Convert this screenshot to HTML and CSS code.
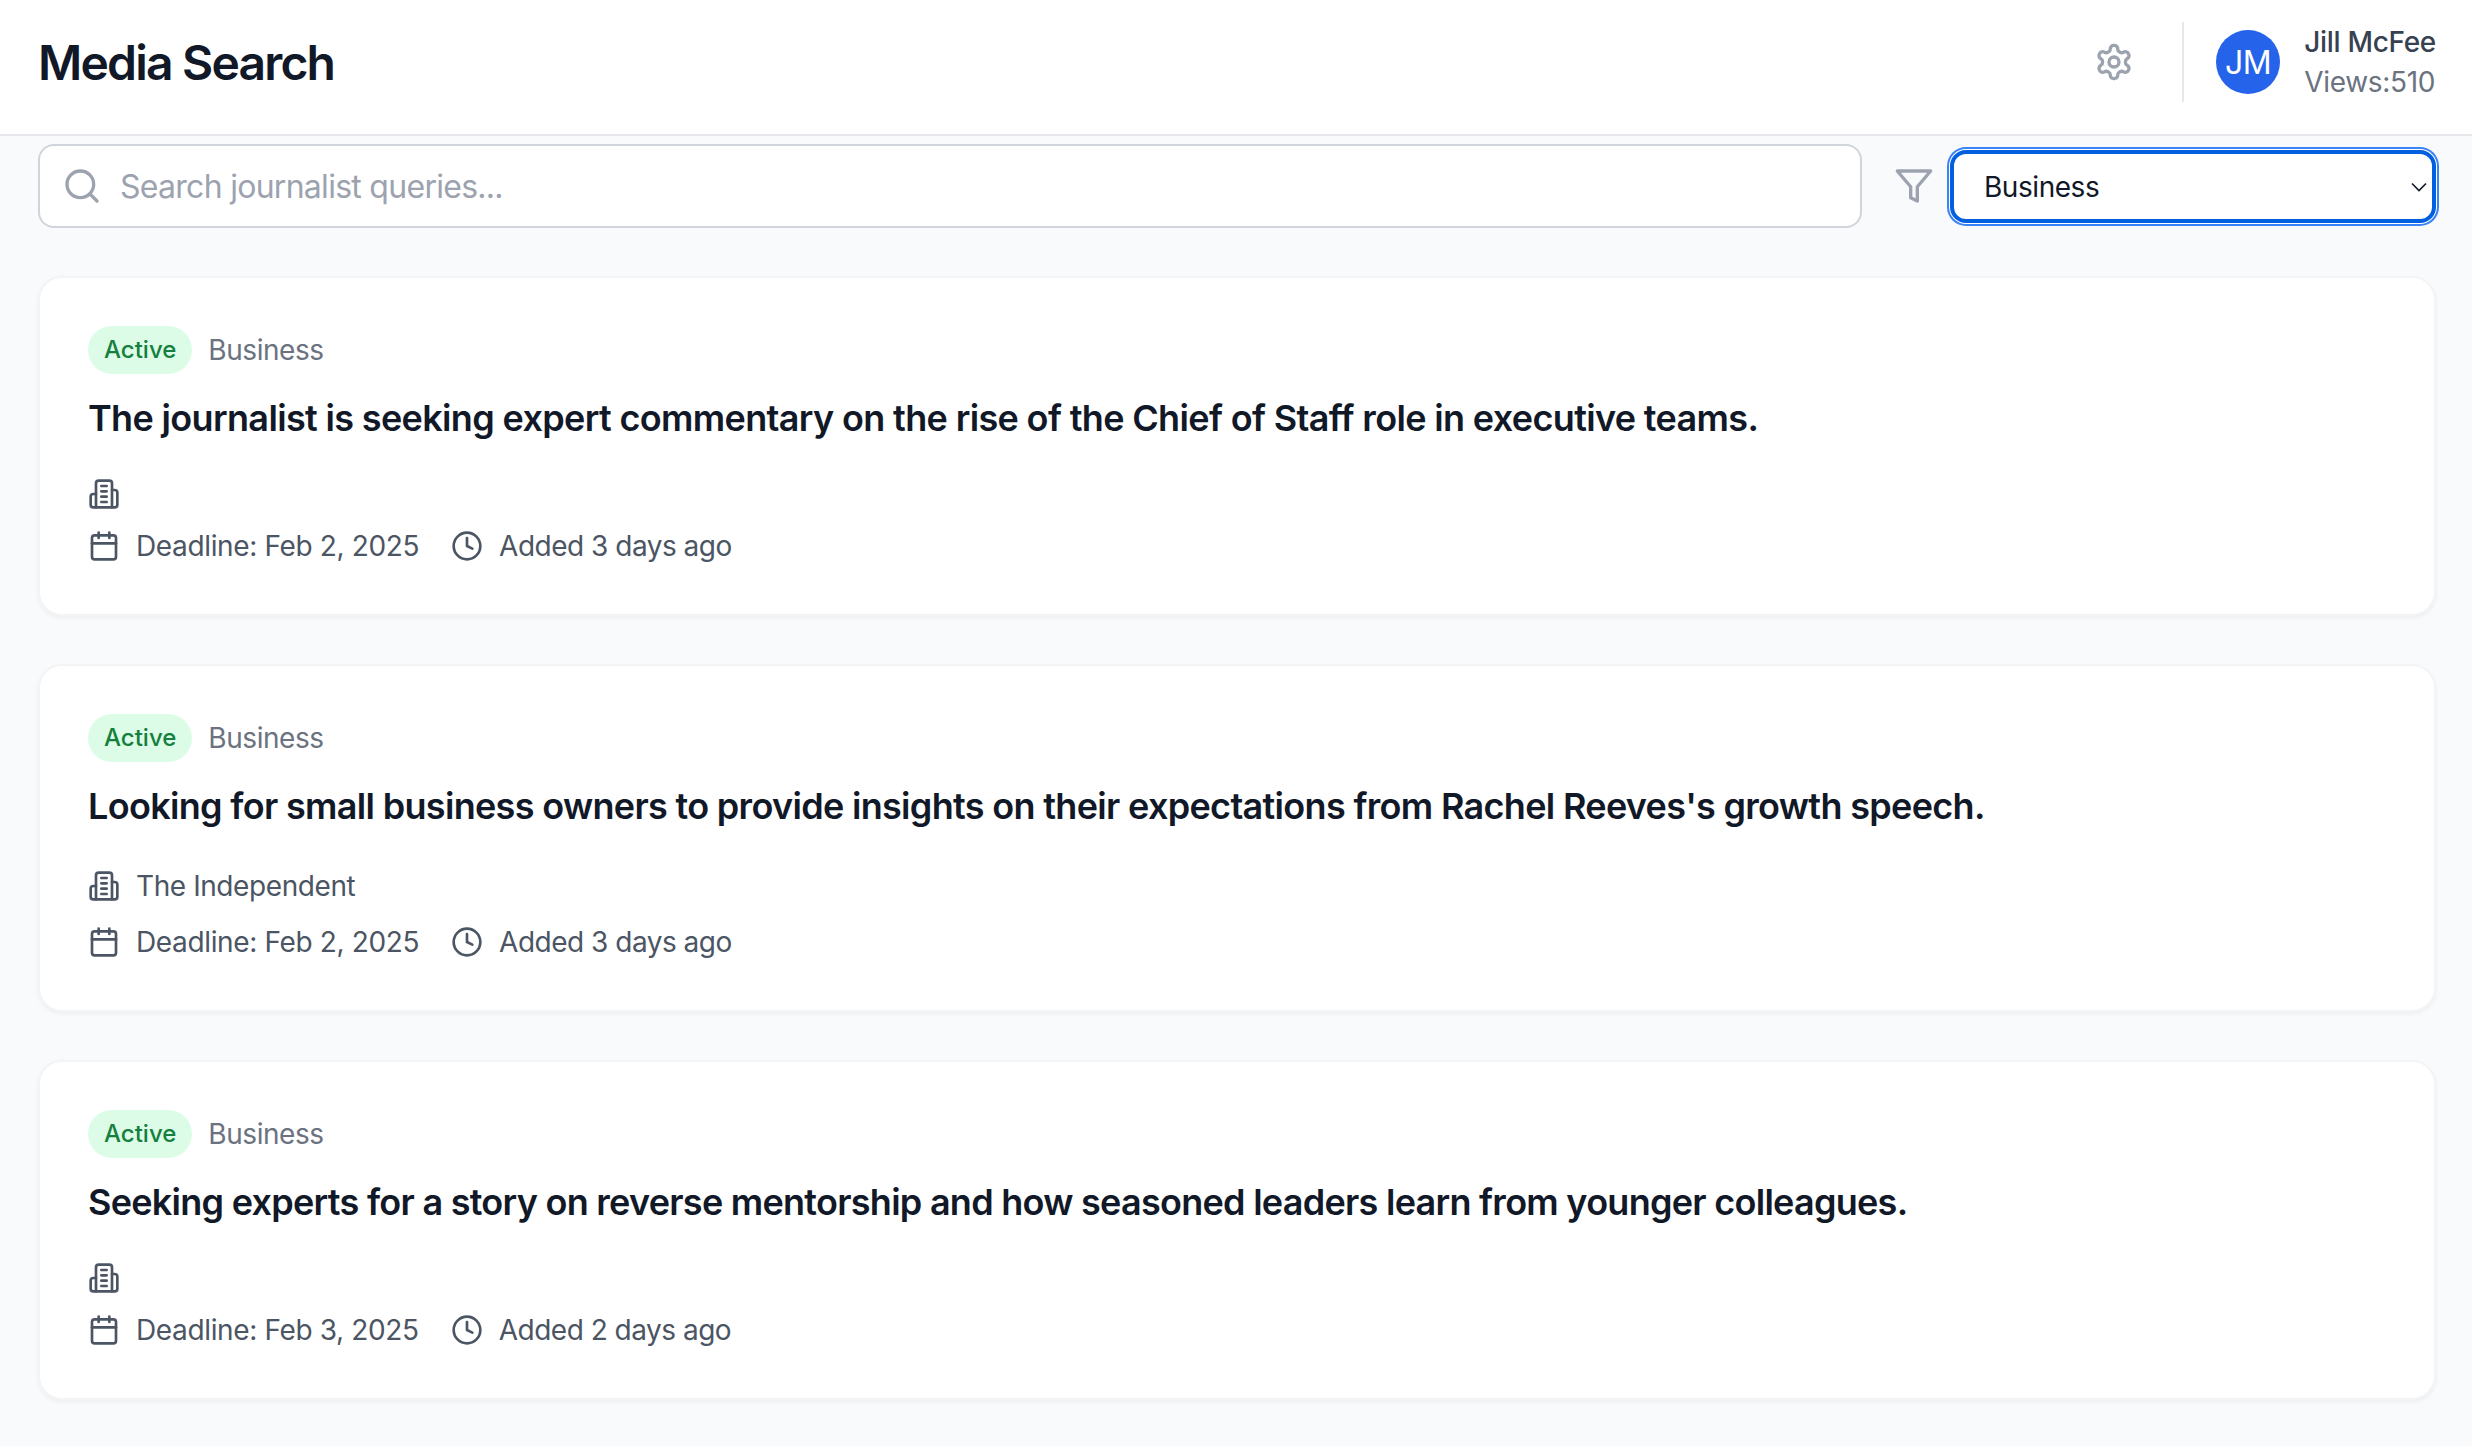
FILE: index.html
```html
<!DOCTYPE html>
<html lang="en">
<head>
<meta charset="utf-8">
<title>Media Search</title>
<link rel="stylesheet" href="styles.css">
</head>
<body>
<header class="topbar">
  <h1 class="title">Media Search</h1>
  <div class="topbar-right">
    <svg class="icon gear" viewBox="0 0 24 24"><path d="M12.22 2h-.44a2 2 0 0 0-2 2v.18a2 2 0 0 1-1 1.73l-.43.25a2 2 0 0 1-2 0l-.15-.08a2 2 0 0 0-2.73.73l-.22.38a2 2 0 0 0 .73 2.73l.15.1a2 2 0 0 1 1 1.72v.51a2 2 0 0 1-1 1.74l-.15.09a2 2 0 0 0-.73 2.73l.22.38a2 2 0 0 0 2.73.73l.15-.08a2 2 0 0 1 2 0l.43.25a2 2 0 0 1 1 1.73V20a2 2 0 0 0 2 2h.44a2 2 0 0 0 2-2v-.18a2 2 0 0 1 1-1.73l.43-.25a2 2 0 0 1 2 0l.15.08a2 2 0 0 0 2.73-.73l.22-.39a2 2 0 0 0-.73-2.73l-.15-.08a2 2 0 0 1-1-1.74v-.5a2 2 0 0 1 1-1.74l.15-.09a2 2 0 0 0 .73-2.73l-.22-.38a2 2 0 0 0-2.73-.73l-.15.08a2 2 0 0 1-2 0l-.43-.25a2 2 0 0 1-1-1.73V4a2 2 0 0 0-2-2z"/><circle cx="12" cy="12" r="3"/></svg>
    <div class="user">
      <div class="avatar">JM</div>
      <div class="user-text">
        <div class="user-name">Jill McFee</div>
        <div class="user-views">Views:510</div>
      </div>
    </div>
  </div>
</header>
<main class="content">
  <div class="toolbar">
    <div class="search">
      <svg class="icon search-icon" viewBox="0 0 24 24"><circle cx="11" cy="11" r="8"/><path d="m21 21-4.3-4.3"/></svg>
      <span class="placeholder">Search journalist queries...</span>
    </div>
    <svg class="icon filter-icon" viewBox="0 0 24 24"><polygon points="22 3 2 3 10 12.46 10 19 14 21 14 12.46 22 3"/></svg>
    <div class="select">
      <span>Business</span>
      <svg class="chevron" viewBox="0 0 16 10"><path d="M1 1.500 8 8.500l7-7"/></svg>
    </div>
  </div>
  <article class="card">
    <div class="tags"><span class="badge">Active</span><span class="category">Business</span></div>
    <h2 class="query">The journalist is seeking expert commentary on the rise of the Chief of Staff role in executive teams.</h2>
    <div class="meta">
      <div class="meta-row outlet"><svg class="icon meta-icon" viewBox="0 0 24 24"><path d="M6 22V4a2 2 0 0 1 2-2h8a2 2 0 0 1 2 2v18Z"/><path d="M6 12H4a2 2 0 0 0-2 2v6a2 2 0 0 0 2 2h2"/><path d="M18 9h2a2 2 0 0 1 2 2v9a2 2 0 0 1-2 2h-2"/><path d="M10 6h4M10 10h4M10 14h4M10 18h4"/></svg></div>
      <div class="meta-row">
        <svg class="icon meta-icon" viewBox="0 0 24 24"><path d="M8 2v4M16 2v4"/><rect width="18" height="18" x="3" y="4" rx="2"/><path d="M3 10h18"/></svg><span class="deadline">Deadline: Feb 2, 2025</span>
        <svg class="icon meta-icon second" viewBox="0 0 24 24"><circle cx="12" cy="12" r="10"/><path d="M12 6v6l4 2"/></svg><span class="added">Added 3 days ago</span>
      </div>
    </div>
  </article>
  <article class="card">
    <div class="tags"><span class="badge">Active</span><span class="category">Business</span></div>
    <h2 class="query query-snug">Looking for small business owners to provide insights on their expectations from Rachel Reeves's growth speech.</h2>
    <div class="meta">
      <div class="meta-row outlet"><svg class="icon meta-icon" viewBox="0 0 24 24"><path d="M6 22V4a2 2 0 0 1 2-2h8a2 2 0 0 1 2 2v18Z"/><path d="M6 12H4a2 2 0 0 0-2 2v6a2 2 0 0 0 2 2h2"/><path d="M18 9h2a2 2 0 0 1 2 2v9a2 2 0 0 1-2 2h-2"/><path d="M10 6h4M10 10h4M10 14h4M10 18h4"/></svg><span>The Independent</span></div>
      <div class="meta-row">
        <svg class="icon meta-icon" viewBox="0 0 24 24"><path d="M8 2v4M16 2v4"/><rect width="18" height="18" x="3" y="4" rx="2"/><path d="M3 10h18"/></svg><span class="deadline">Deadline: Feb 2, 2025</span>
        <svg class="icon meta-icon second" viewBox="0 0 24 24"><circle cx="12" cy="12" r="10"/><path d="M12 6v6l4 2"/></svg><span class="added">Added 3 days ago</span>
      </div>
    </div>
  </article>
  <article class="card">
    <div class="tags"><span class="badge">Active</span><span class="category">Business</span></div>
    <h2 class="query query-tight">Seeking experts for a story on reverse mentorship and how seasoned leaders learn from younger colleagues.</h2>
    <div class="meta">
      <div class="meta-row outlet"><svg class="icon meta-icon" viewBox="0 0 24 24"><path d="M6 22V4a2 2 0 0 1 2-2h8a2 2 0 0 1 2 2v18Z"/><path d="M6 12H4a2 2 0 0 0-2 2v6a2 2 0 0 0 2 2h2"/><path d="M18 9h2a2 2 0 0 1 2 2v9a2 2 0 0 1-2 2h-2"/><path d="M10 6h4M10 10h4M10 14h4M10 18h4"/></svg></div>
      <div class="meta-row">
        <svg class="icon meta-icon" viewBox="0 0 24 24"><path d="M8 2v4M16 2v4"/><rect width="18" height="18" x="3" y="4" rx="2"/><path d="M3 10h18"/></svg><span class="deadline">Deadline: Feb 3, 2025</span>
        <svg class="icon meta-icon second" viewBox="0 0 24 24"><circle cx="12" cy="12" r="10"/><path d="M12 6v6l4 2"/></svg><span class="added">Added 2 days ago</span>
      </div>
    </div>
  </article>
</main>
</body>
</html>
```
FILE: styles.css
```css
* { box-sizing: border-box; }
html, body { margin: 0; padding: 0; }
body {
  width: 2472px;
  height: 1446px;
  overflow: hidden;
  background: #f9fafb;
  font-family: Inter, "Liberation Sans", sans-serif;
  color: #111827;
}
.icon { fill: none; stroke: currentColor; stroke-width: 2; stroke-linecap: round; stroke-linejoin: round; flex: none; }
.topbar {
  height: 136px;
  background: #fff;
  border-bottom: 2px solid #e5e7eb;
  padding: 0 36px 10px 38px;
  display: flex;
  align-items: center;
  justify-content: space-between;
}
.title { margin: 2px 0 0; font-size: 48px; line-height: 64px; font-weight: 600; letter-spacing: -1.8px; color: #111827; }
.topbar-right { display: flex; align-items: center; }
.gear { width: 40px; height: 40px; color: #9ca3af; margin-right: 48px; }
.user { display: flex; align-items: center; gap: 24px; border-left: 2px solid #e5e7eb; padding-left: 32px; height: 80px; }
.avatar { width: 64px; height: 64px; border-radius: 50%; background: #2563eb; color: #fff; display: flex; align-items: center; justify-content: center; font-size: 32px; letter-spacing: -.5px; }
.user-name { font-size: 28px; line-height: 40px; font-weight: 500; letter-spacing: -.3px; color: #374151; }
.user-views { font-size: 28px; line-height: 40px; letter-spacing: -.3px; color: #6b7280; }
.content { padding: 8px 36px 0 38px; }
.toolbar { display: flex; align-items: center; margin-bottom: 48px; }
.search {
  flex: 1;
  height: 84px;
  background: #fff;
  border: 2px solid #d1d5db;
  border-radius: 16px;
  display: flex;
  align-items: center;
  padding-left: 22px;
  gap: 18px;
}
.search-icon { width: 40px; height: 40px; color: #9ca3af; }
.placeholder { font-size: 32px; letter-spacing: -.72px; color: #9ca3af; }
.filter-icon { width: 40px; height: 40px; color: #9ca3af; margin: 0 16px 0 32px; }
.select {
  width: 486px;
  height: 73px;
  margin-top: 1px;
  background: #fff;
  border: 4px solid #0060df;
  box-shadow: 0 0 0 1px #fff, 0 0 0 3px #3b82f6;
  border-radius: 16px;
  display: flex;
  align-items: center;
  justify-content: space-between;
  padding: 0 5px 0 30px;
  font-size: 28px;
  letter-spacing: -.45px;
  color: #111827;
}
.chevron { width: 16px; height: 10px; fill: none; stroke: #111827; stroke-width: 1.6; }
.card {
  background: #fff;
  border: 2px solid #f3f4f6;
  border-radius: 24px;
  box-shadow: 0 2px 4px rgba(0,0,0,.05);
  padding: 48px;
  margin: 0 0 48px 0;
}
.tags { display: flex; align-items: center; gap: 16px; }
.badge { background: #dcfce7; color: #15803d; font-size: 24px; font-weight: 500; line-height: 48px; padding: 0 16px; border-radius: 24px; }
.category { font-size: 28px; line-height: 40px; letter-spacing: -.45px; color: #6b7280; }
.query { margin: 16px 0 0; font-size: 36px; line-height: 56px; font-weight: 600; letter-spacing: -.65px; color: #111827; }
.query-snug { letter-spacing: -.68px; }
.query-tight { letter-spacing: -.725px; }
.meta { margin-top: 32px; color: #4b5563; font-size: 28px; line-height: 40px; letter-spacing: -.42px; }
.deadline { letter-spacing: -.36px; }
.added { letter-spacing: -.5px; }
.meta-row { display: flex; align-items: center; }
.outlet { margin-bottom: 16px; }
.meta-icon { width: 32px; height: 32px; margin-right: 16px; }
.second { margin-left: 32px; }
```
